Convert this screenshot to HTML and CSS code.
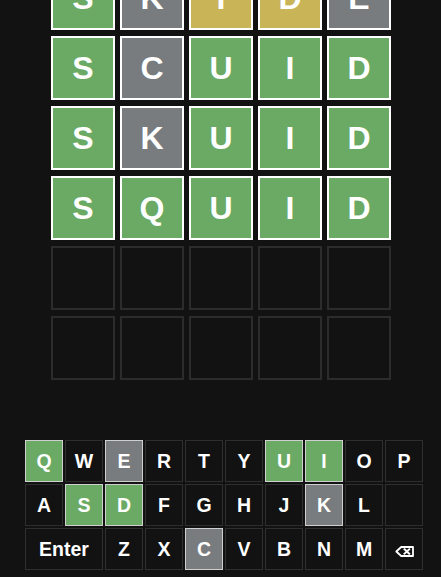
FILE: index.html
```html
<!DOCTYPE html>
<html lang="en">
<head>
<meta charset="utf-8">
<title>Wordle</title>
<link rel="stylesheet" href="styles.css">
</head>
<body>
<main class="app">
  <div class="board">
    <div class="tile correct">S</div><div class="tile absent">K</div><div class="tile present">I</div><div class="tile present">D</div><div class="tile absent">E</div>
    <div class="tile correct">S</div><div class="tile absent">C</div><div class="tile correct">U</div><div class="tile correct">I</div><div class="tile correct">D</div>
    <div class="tile correct">S</div><div class="tile absent">K</div><div class="tile correct">U</div><div class="tile correct">I</div><div class="tile correct">D</div>
    <div class="tile correct">S</div><div class="tile correct">Q</div><div class="tile correct">U</div><div class="tile correct">I</div><div class="tile correct">D</div>
    <div class="tile empty"></div><div class="tile empty"></div><div class="tile empty"></div><div class="tile empty"></div><div class="tile empty"></div>
    <div class="tile empty"></div><div class="tile empty"></div><div class="tile empty"></div><div class="tile empty"></div><div class="tile empty"></div>
  </div>
  <div class="keyboard">
    <button class="key correct">Q</button><button class="key">W</button><button class="key absent">E</button><button class="key">R</button><button class="key">T</button><button class="key">Y</button><button class="key correct">U</button><button class="key correct">I</button><button class="key">O</button><button class="key">P</button>
    <button class="key">A</button><button class="key correct">S</button><button class="key correct">D</button><button class="key">F</button><button class="key">G</button><button class="key">H</button><button class="key">J</button><button class="key absent">K</button><button class="key">L</button><button class="key"></button>
    <button class="key wide">Enter</button><button class="key">Z</button><button class="key">X</button><button class="key absent">C</button><button class="key">V</button><button class="key">B</button><button class="key">N</button><button class="key">M</button>
    <button class="key backspace" aria-label="Backspace">
      <svg class="bs-icon" width="19" height="11" viewBox="0 0 19 11" aria-hidden="true">
        <path d="M6.2 1 H18 V10 H6.2 L1.3 5.5 Z" fill="none" stroke="#fff" stroke-width="1.8" stroke-linejoin="round"/>
        <path d="M9.5 3.3 L14.2 7.7 M14.2 3.3 L9.5 7.7" stroke="#fff" stroke-width="2" stroke-linecap="square"/>
      </svg>
    </button>
  </div>
</main>
</body>
</html>
```
FILE: styles.css
```css
* { box-sizing: border-box; }
html, body {
  margin: 0;
  padding: 0;
  background: #121212;
  height: 100%;
  overflow: hidden;
}
body {
  font-family: "Liberation Sans", Arial, sans-serif;
  color: #fff;
}
.app {
  display: flex;
  flex-direction: column;
}
.board {
  display: grid;
  grid-template-columns: repeat(5, 64px);
  grid-auto-rows: 64px;
  column-gap: 5px;
  row-gap: 6px;
  width: 340px;
  margin: -34px 0 0 51px;
}
.tile {
  display: flex;
  align-items: center;
  justify-content: center;
  border: 2px solid #fff;
  font-size: 32px;
  font-weight: 700;
  color: #fff;
}
.tile.correct { background: #6aaa64; }
.tile.absent { background: #787c7e; }
.tile.present { background: #c9b458; }
.tile.empty {
  background: #121212;
  border-color: #2c2c2c;
}
.keyboard {
  display: grid;
  grid-template-columns: repeat(10, 38px);
  grid-auto-rows: 42px;
  gap: 2px;
  width: 398px;
  margin: 60px 0 0 25px;
}
.key {
  display: flex;
  align-items: center;
  justify-content: center;
  padding: 0;
  margin: 0;
  border: 1px solid #2e2e2e;
  border-radius: 0;
  background: #121212;
  color: #fff;
  font-family: "Liberation Sans", Arial, sans-serif;
  font-size: 19.5px;
  font-weight: 700;
}
.key.correct { background: #6aaa64; border-color: #cfcfcf; }
.key.absent { background: #787c7e; border-color: #cfcfcf; }
.key.wide { grid-column: span 2; }
.bs-icon { display: block; margin-top: 4px; }
```
